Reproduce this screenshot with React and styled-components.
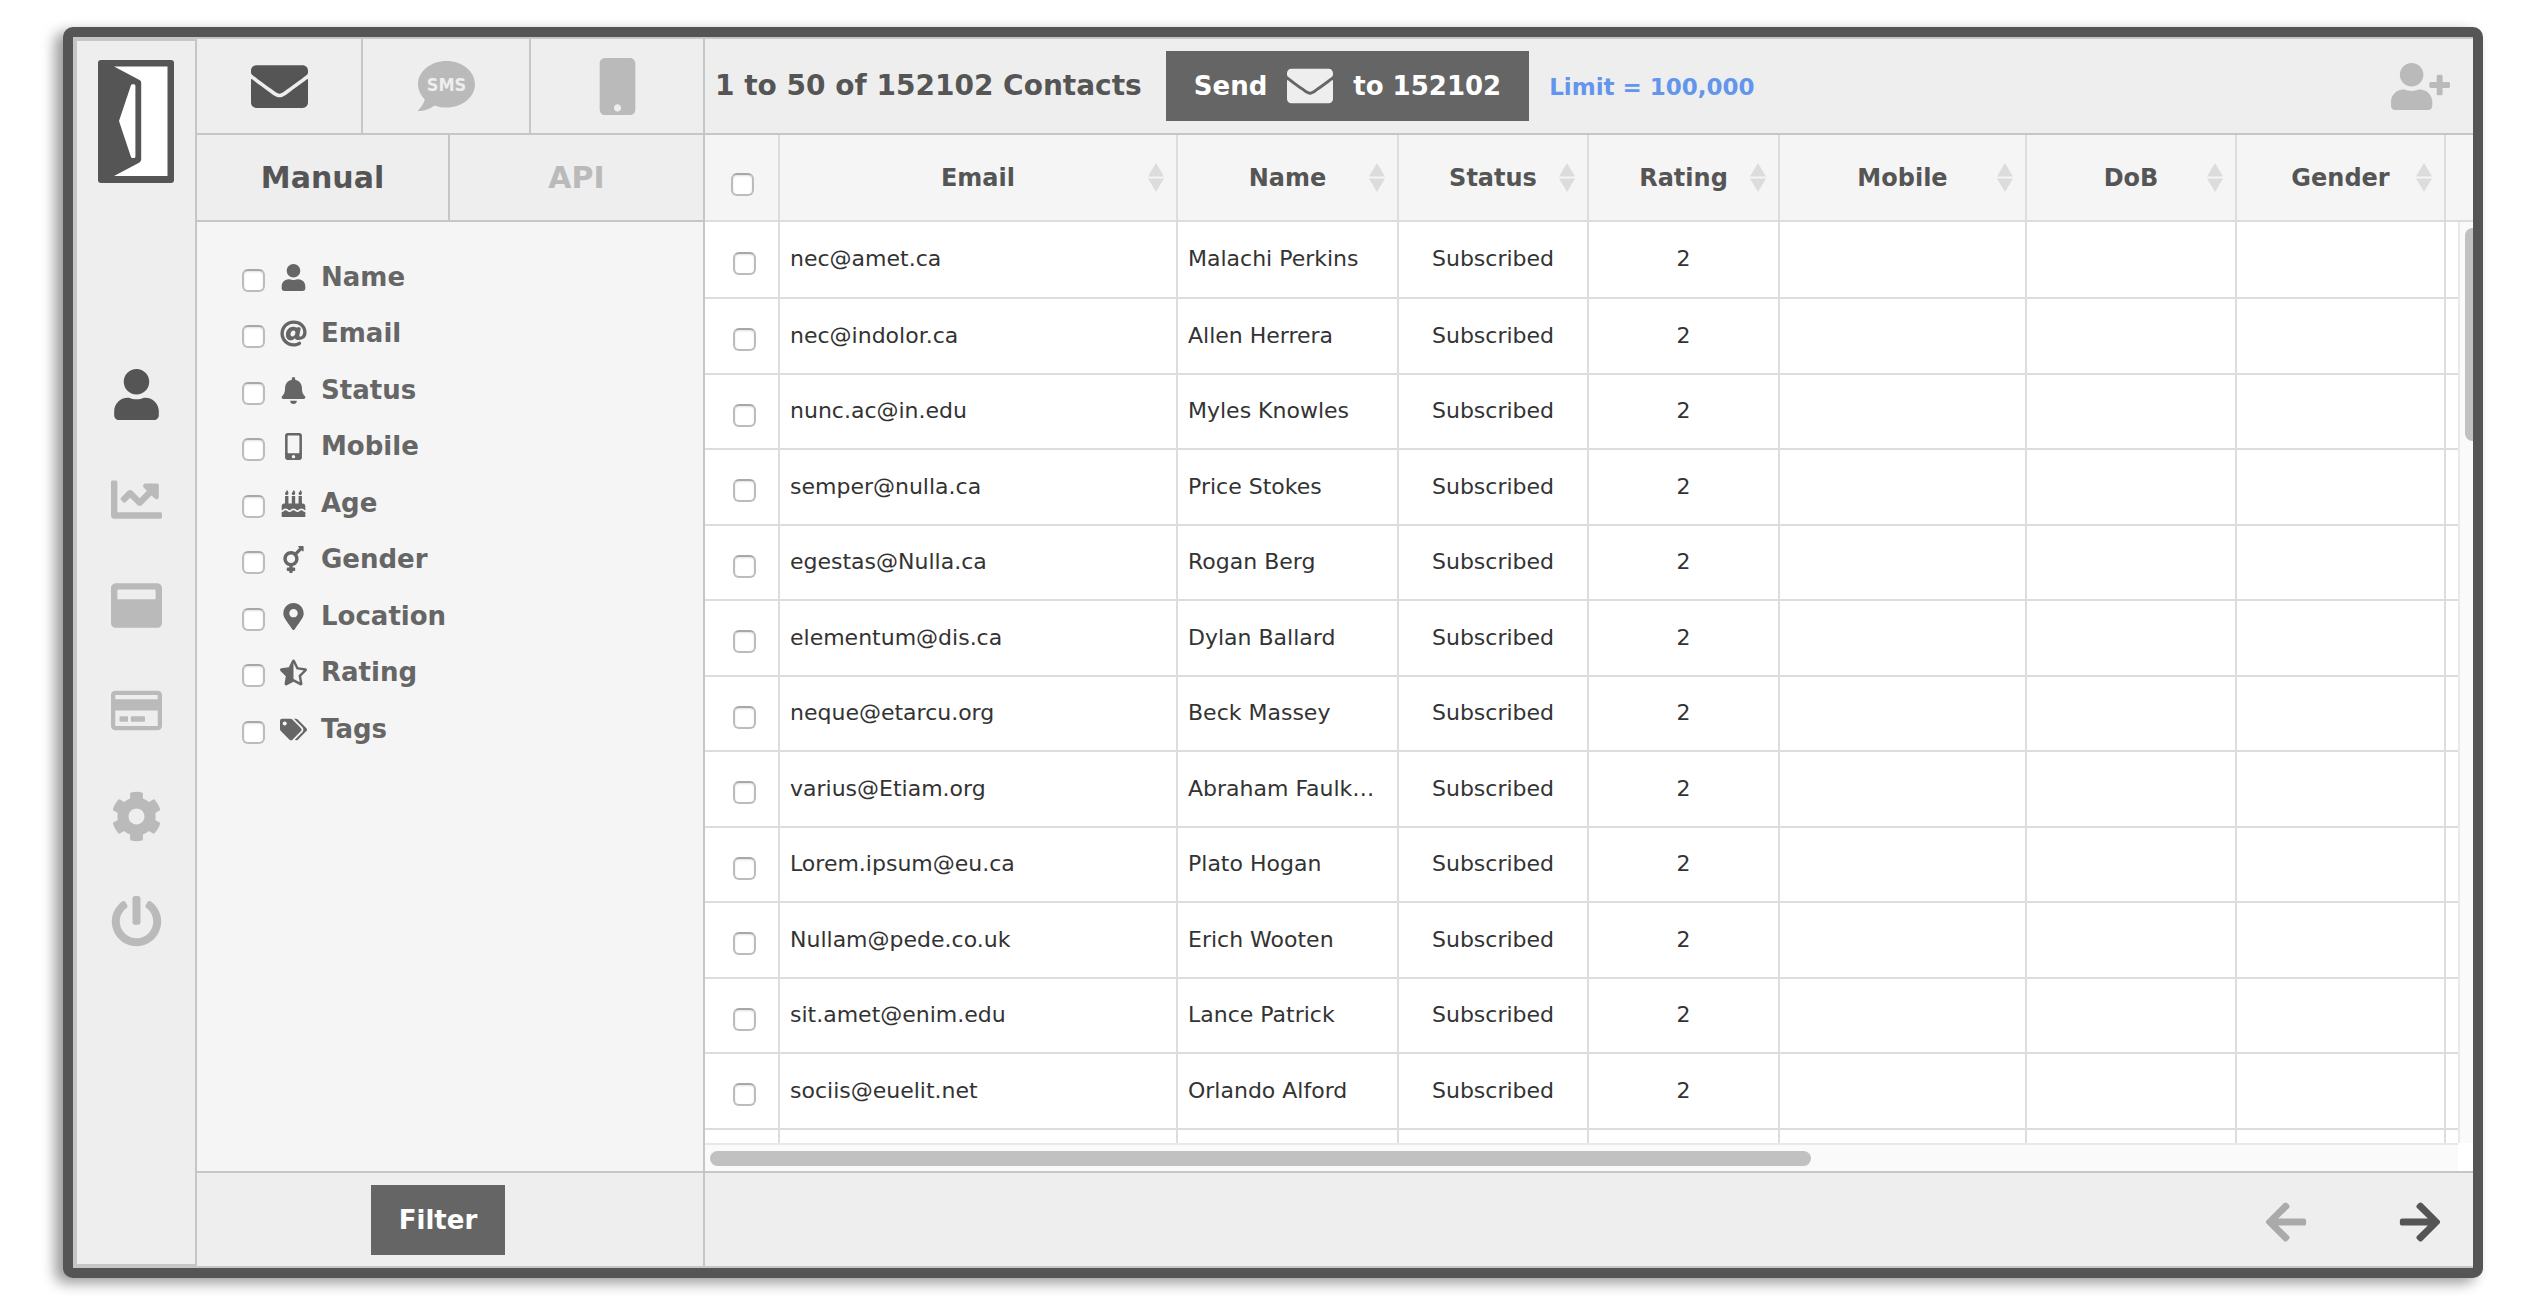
import React from "react";
import styled, { createGlobalStyle, css } from "styled-components";
import {
  FaArrowLeft,
  FaArrowRight,
  FaAt,
  FaBell,
  FaBirthdayCake,
  FaChartLine,
  FaCog,
  FaEnvelope,
  FaMapMarkerAlt,
  FaMobile,
  FaMobileAlt,
  FaPowerOff,
  FaRegCreditCard,
  FaStarHalfAlt,
  FaTags,
  FaTransgender,
  FaUser,
  FaUserPlus,
  FaWindowMaximize,
} from "react-icons/fa";

const c = {
  dark: "#555555",
  button: "#656565",
  muted: "#bababa",
  bar: "#eeeeee",
  panel: "#f5f5f5",
  line: "#c6c6c6",
  cellLine: "#dddddd",
  thumb: "#c1c1c1",
  link: "#6495ed",
};

const GlobalStyle = createGlobalStyle`
  *, *::before, *::after { box-sizing: border-box; }
  body {
    margin: 0;
    background: #fff;
    color: ${c.dark};
    font-family: "DejaVu Sans", Verdana, sans-serif;
    font-size: 22px;
  }
  button {
    margin: 0;
    padding: 0;
    border: 0;
    background: none;
    color: inherit;
    font: inherit;
    cursor: pointer;
  }
  svg { display: block; flex: none; }
`;

const Page = styled.div`
  height: 100vh;
  padding: 27px 62px 26px 63px;
  display: flex;
`;

const Frame = styled.div`
  flex: 1;
  min-width: 0;
  display: flex;
  overflow: hidden;
  border: 10px solid ${c.dark};
  border-radius: 10px;
  background: ${c.bar};
  box-shadow: -8px 5px 14px rgba(0, 0, 0, 0.4);
`;

const Sidebar = styled.aside`
  width: 124px;
  flex: none;
  border: 4px solid ${c.line};
  border-right-width: 2px;
  display: flex;
  flex-direction: column;
  align-items: center;
  padding-top: 19px;
`;

const Nav = styled.nav`
  margin-top: 158px;
  display: flex;
  flex-direction: column;
`;

const NavItem = styled.button`
  height: 106px;
  width: 76px;
  display: flex;
  align-items: center;
  justify-content: center;
  && { color: ${(p) => (p.$active ? c.dark : c.muted)}; }
  &:nth-child(even) { height: 105px; }
`;

const Main = styled.div`
  flex: 1;
  min-width: 0;
  display: flex;
  border: solid ${c.line};
  border-width: 2px 0;
`;

const FilterPanel = styled.section`
  width: 508px;
  flex: none;
  display: flex;
  flex-direction: column;
  border-right: 2px solid ${c.line};
`;

const tabRow = css`
  display: grid;
  flex: none;
  border-bottom: 2px solid ${c.line};
`;

const ChannelTabs = styled.div`
  ${tabRow}
  height: 96px;
  grid-template-columns: 166px 168px 1fr;
`;

const SourceTabs = styled.div`
  ${tabRow}
  height: 87px;
  grid-template-columns: 1fr 1fr;
`;

const Tab = styled.button`
  display: flex;
  align-items: center;
  justify-content: center;
  && {
    color: ${(p) => (p.$active ? c.dark : c.muted)};
    font-size: 30px;
    font-weight: bold;
  }
  &:not(:last-child) { border-right: 2px solid ${c.line}; }
`;

const FilterList = styled.ul`
  flex: 1;
  min-height: 0;
  margin: 0;
  padding: 27px 0 0 45px;
  list-style: none;
  background: ${c.panel};
`;

const FilterItem = styled.li`
  height: 56px;
  &:nth-child(even) { height: 57px; }
`;

const FilterLabel = styled.label`
  height: 56px;
  display: flex;
  align-items: center;
  gap: 12px;
  color: #666;
  font-size: 26px;
  font-weight: bold;
`;

const IconSlot = styled.span`
  width: 32px;
  display: flex;
  justify-content: center;
`;

const Checkbox = styled.input.attrs({ type: "checkbox" })`
  appearance: none;
  display: block;
  flex: none;
  width: 23px;
  height: 23px;
  margin: ${(p) => p.$drop}px 0 0;
  border: 2px solid #bcbcbc;
  border-top-color: #a8a8a8;
  border-radius: 6px;
  background: #fff;
  box-shadow: inset 0 1px 2px rgba(0, 0, 0, 0.12);
`;

const Footer = styled.footer`
  height: 95px;
  flex: none;
  border-top: 2px solid ${c.line};
  display: flex;
  align-items: center;
  justify-content: ${(p) => p.$align};
  gap: 88px;
  padding: ${(p) => p.$padding};
`;

const SolidButton = styled.button`
  height: 70px;
  display: flex;
  align-items: center;
  gap: 20px;
  && {
    padding: 0 28px;
    background: ${c.button};
    color: #fff;
    font-size: 26px;
    font-weight: bold;
  }
  svg { color: ${c.bar}; }
`;

const Contacts = styled.section`
  flex: 1;
  min-width: 0;
  display: flex;
  flex-direction: column;
`;

const Toolbar = styled.header`
  height: 96px;
  flex: none;
  display: flex;
  align-items: center;
  justify-content: space-between;
  padding: 0 23px 0 10px;
  border-bottom: 2px solid ${c.line};
`;

const Summary = styled.div`
  display: flex;
  align-items: baseline;
  gap: 20px;
`;

const Title = styled.h1`
  margin: 0;
  padding-right: 4px;
  font-size: 28px;
  line-height: 34px;
`;

const Limit = styled.a`
  color: ${c.link};
  font-size: 23px;
  font-weight: bold;
  text-decoration: none;
`;

const IconButton = styled.button`
  && { color: ${(p) => p.$color}; }
`;

const Table = styled.table`
  width: 100%;
  table-layout: fixed;
  border-collapse: separate;
  border-spacing: 0;
`;

const cell = css`
  border-right: 2px solid ${c.cellLine};
  border-bottom: 2px solid ${c.cellLine};
  &:last-child { border-right: 0; }
`;

const HeadCell = styled.th`
  ${cell}
  height: 87px;
  padding: ${(p) => (p.$check ? "0 0 0 26px" : "0")};
  background: ${c.panel};
  font-size: 24px;
`;

const SortButton = styled.button`
  width: 100%;
  display: grid;
  grid-template-columns: 1fr auto 1fr;
  align-items: center;
  && { padding: 0 12px; font-weight: bold; }
  svg { justify-self: end; }
`;

const Row = styled.tr`
  height: 75px;
  background: #fff;
  &:nth-child(even) { height: 76px; }
  &:first-child { height: 77px; }
`;

const Cell = styled.td`
  ${cell}
  padding: ${(p) => (p.$check ? "0 0 0 28px" : "0 10px 2px")};
  color: #333;
  text-align: ${(p) => (p.$center ? "center" : "left")};
  white-space: nowrap;
  overflow: hidden;
  text-overflow: ellipsis;
`;

const Viewport = styled.div`
  flex: 1;
  min-height: 0;
  display: grid;
  grid-template-columns: 1fr 15px;
  grid-template-rows: minmax(0, 1fr) 28px;
  background: #fff;
`;

const Rows = styled.div`
  overflow: hidden;
`;

const Track = styled.div`
  overflow: hidden;
  border: 0 solid #e8e8e8;
  border-width: ${(p) => (p.$vertical ? "0 0 0 2px" : "2px 0 0")};
  padding: 6px 0 0 5px;
  background: #fafafa;
`;

const Thumb = styled.div`
  width: ${(p) => (p.$vertical ? "15px" : "63%")};
  height: ${(p) => (p.$vertical ? "213px" : "15px")};
  border-radius: 8px;
  background: ${c.thumb};
`;

function Logo() {
  return (
    <svg width="76" height="123" viewBox="0 0 76 123" role="img" aria-label="Open door logo">
      <rect width="76" height="123" rx="3" fill={c.dark} />
      <path
        d="M16 6.5H69.5V116H16L41.5 102.4Q43.2 101.4 43.2 99.6V22.6Q43.2 20.8 41.5 19.9Z"
        fill="#fff"
      />
      <path
        d="M34.4 24.3H36Q37.4 24.3 37.4 25.8V96.4Q37.4 98 36 98H34.4Q33.2 98 32.9 96.8L21 61L32.9 25.6Q33.2 24.3 34.4 24.3Z"
        fill="#fff"
      />
    </svg>
  );
}

function SmsIcon() {
  return (
    <svg width="57" height="50" viewBox="0 0 57 50" aria-hidden="true">
      <path
        d="M28.5 0C44.2 0 57 10.4 57 23.3S44.2 46.6 28.5 46.6Q22 46.6 16.6 44.4Q9.5 49.8 .4 50Q-.4 49.8 .4 49Q5.5 43.5 6.8 38.4Q0 32 0 23.3C0 10.4 12.8 0 28.5 0Z"
        fill="currentColor"
      />
      <text
        x="28.5"
        y="30"
        textAnchor="middle"
        fontFamily="'DejaVu Sans Condensed', 'Open Sans', sans-serif"
        fontSize="18"
        fontWeight="bold"
        fill={c.bar}
      >
        SMS
      </text>
    </svg>
  );
}

function SortIcon() {
  return (
    <svg width="16" height="29" viewBox="0 0 16 29" aria-hidden="true">
      <path d="M8 0L16 13.5H0ZM0 15.5H16L8 29Z" fill="#dcdcdc" />
    </svg>
  );
}

const NAV = [
  ["Contacts", FaUser],
  ["Reports", FaChartLine],
  ["Templates", FaWindowMaximize],
  ["Billing", FaRegCreditCard],
  ["Settings", FaCog],
  ["Log out", FaPowerOff],
];

const FILTERS = [
  ["Name", FaUser],
  ["Email", FaAt],
  ["Status", FaBell],
  ["Mobile", FaMobileAlt],
  ["Age", FaBirthdayCake],
  ["Gender", FaTransgender],
  ["Location", FaMapMarkerAlt],
  ["Rating", FaStarHalfAlt],
  ["Tags", FaTags],
];

const COLUMNS = [
  ["Email", 398],
  ["Name", 221],
  ["Status", 190],
  ["Rating", 191],
  ["Mobile", 247],
  ["DoB", 210],
  ["Gender", 209],
];

const CONTACTS = [
  ["nec@amet.ca", "Malachi Perkins"],
  ["nec@indolor.ca", "Allen Herrera"],
  ["nunc.ac@in.edu", "Myles Knowles"],
  ["semper@nulla.ca", "Price Stokes"],
  ["egestas@Nulla.ca", "Rogan Berg"],
  ["elementum@dis.ca", "Dylan Ballard"],
  ["neque@etarcu.org", "Beck Massey"],
  ["varius@Etiam.org", "Abraham Faulkner"],
  ["Lorem.ipsum@eu.ca", "Plato Hogan"],
  ["Nullam@pede.co.uk", "Erich Wooten"],
  ["sit.amet@enim.edu", "Lance Patrick"],
  ["sociis@euelit.net", "Orlando Alford"],
];

function Columns() {
  return (
    <colgroup>
      <col width={75} />
      {COLUMNS.map(([name, width]) => (
        <col key={name} width={width} />
      ))}
      <col />
    </colgroup>
  );
}

export default function App() {
  return (
    <>
      <GlobalStyle />
      <Page>
        <Frame>
          <Sidebar>
            <Logo />
            <Nav aria-label="Main">
              {NAV.map(([name, Icon], i) => (
                <NavItem key={name} $active={i === 0} aria-label={name}>
                  <Icon size={51} />
                </NavItem>
              ))}
            </Nav>
          </Sidebar>
          <Main>
            <FilterPanel>
              <ChannelTabs>
                <Tab $active aria-label="Email">
                  <FaEnvelope size={57} />
                </Tab>
                <Tab aria-label="SMS">
                  <SmsIcon />
                </Tab>
                <Tab aria-label="Push">
                  <FaMobile size={57} />
                </Tab>
              </ChannelTabs>
              <SourceTabs>
                <Tab $active>Manual</Tab>
                <Tab>API</Tab>
              </SourceTabs>
              <FilterList>
                {FILTERS.map(([name, Icon]) => (
                  <FilterItem key={name}>
                    <FilterLabel>
                      <Checkbox $drop={7} />
                      <IconSlot>
                        <Icon size={27} />
                      </IconSlot>
                      {name}
                    </FilterLabel>
                  </FilterItem>
                ))}
              </FilterList>
              <Footer $align="center" $padding="0 24px 0 0">
                <SolidButton>Filter</SolidButton>
              </Footer>
            </FilterPanel>
            <Contacts>
              <Toolbar>
                <Summary>
                  <Title>1 to 50 of 152102 Contacts</Title>
                  <SolidButton>
                    Send
                    <FaEnvelope size={46} />
                    to 152102
                  </SolidButton>
                  <Limit href="#limit">Limit = 100,000</Limit>
                </Summary>
                <IconButton $color={c.muted} aria-label="Add contact">
                  <FaUserPlus size={59} />
                </IconButton>
              </Toolbar>
              <Table>
                <Columns />
                <thead>
                  <tr>
                    <HeadCell $check>
                      <Checkbox $drop={14} aria-label="Select all" />
                    </HeadCell>
                    {COLUMNS.map(([name]) => (
                      <HeadCell key={name} scope="col">
                        <SortButton>
                          <span />
                          {name}
                          <SortIcon />
                        </SortButton>
                      </HeadCell>
                    ))}
                    <HeadCell />
                  </tr>
                </thead>
              </Table>
              <Viewport>
                <Rows>
                  <Table>
                    <Columns />
                    <tbody>
                      {CONTACTS.map(([email, name]) => (
                        <Row key={email}>
                          <Cell $check>
                            <Checkbox $drop={7} aria-label={`Select ${email}`} />
                          </Cell>
                          <Cell>{email}</Cell>
                          <Cell>{name}</Cell>
                          <Cell $center>Subscribed</Cell>
                          <Cell $center>2</Cell>
                          <Cell />
                          <Cell />
                          <Cell />
                          <Cell />
                        </Row>
                      ))}
                      <Row>
                        <Cell $check />
                        {COLUMNS.map(([name]) => (
                          <Cell key={name} />
                        ))}
                        <Cell />
                      </Row>
                    </tbody>
                  </Table>
                </Rows>
                <Track $vertical>
                  <Thumb $vertical />
                </Track>
                <Track>
                  <Thumb />
                </Track>
              </Viewport>
              <Footer $align="flex-end" $padding="5px 30px 0 0">
                <IconButton $color="#aaaaaa" aria-label="Previous page">
                  <FaArrowLeft size={46} />
                </IconButton>
                <IconButton $color={c.dark} aria-label="Next page">
                  <FaArrowRight size={46} />
                </IconButton>
              </Footer>
            </Contacts>
          </Main>
        </Frame>
      </Page>
    </>
  );
}
